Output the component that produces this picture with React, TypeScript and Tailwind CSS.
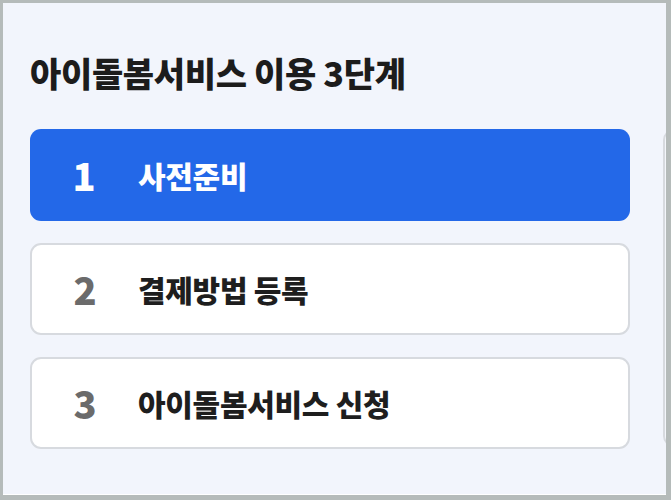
import React from "react";

const steps = [
  { num: 1, label: "사전준비", active: true },
  { num: 2, label: "결제방법 등록", active: false },
  { num: 3, label: "아이돌봄서비스 신청", active: false },
];

const font = { fontFamily: '"Noto Sans CJK KR", "Noto Sans", sans-serif' };

export default function App() {
  return (
    <div className="w-[671px] h-[500px] bg-[#b5bbba] pt-[3px] pl-[3px] pr-[5px] pb-[5px]" style={font}>
      <div className="h-full w-full bg-[#f2f5fc] border-b border-white overflow-hidden pl-[27px] pt-[46px]">
        <h1 className="text-[34px] font-black leading-[48px] tracking-[-0.01em] text-[#1c1c1c]">
          아이돌봄서비스 이용 3단계
        </h1>
        <div className="flex gap-[33px] mt-[32px]">
          <div className="w-[600px] shrink-0 flex flex-col gap-[22px]">
            {steps.map((s) => (
              <div
                key={s.num}
                className={
                  s.active
                    ? "h-[92px] rounded-[11px] bg-[#2368e8] flex items-center"
                    : "h-[92px] rounded-[11px] bg-white border-2 border-[#d7dadf] flex items-center"
                }
              >
                <div
                  className={
                    s.active
                      ? "w-[108px] text-center text-[38px] font-black text-white leading-none"
                      : "w-[106px] text-center text-[38px] font-black text-[#6b6b6b] leading-none"
                  }
                >
                  {s.num}
                </div>
                <div
                  className={
                    s.active
                      ? "text-[30px] font-black text-white tracking-[-0.01em]"
                      : "text-[30px] font-black text-[#1e1e1e] tracking-[-0.01em]"
                  }
                >
                  {s.label}
                </div>
              </div>
            ))}
          </div>
          <div className="w-[300px] h-[318px] shrink-0 rounded-[11px] border-2 border-[#d7dadf] bg-[#f4f6fb]" />
        </div>
      </div>
    </div>
  );
}
